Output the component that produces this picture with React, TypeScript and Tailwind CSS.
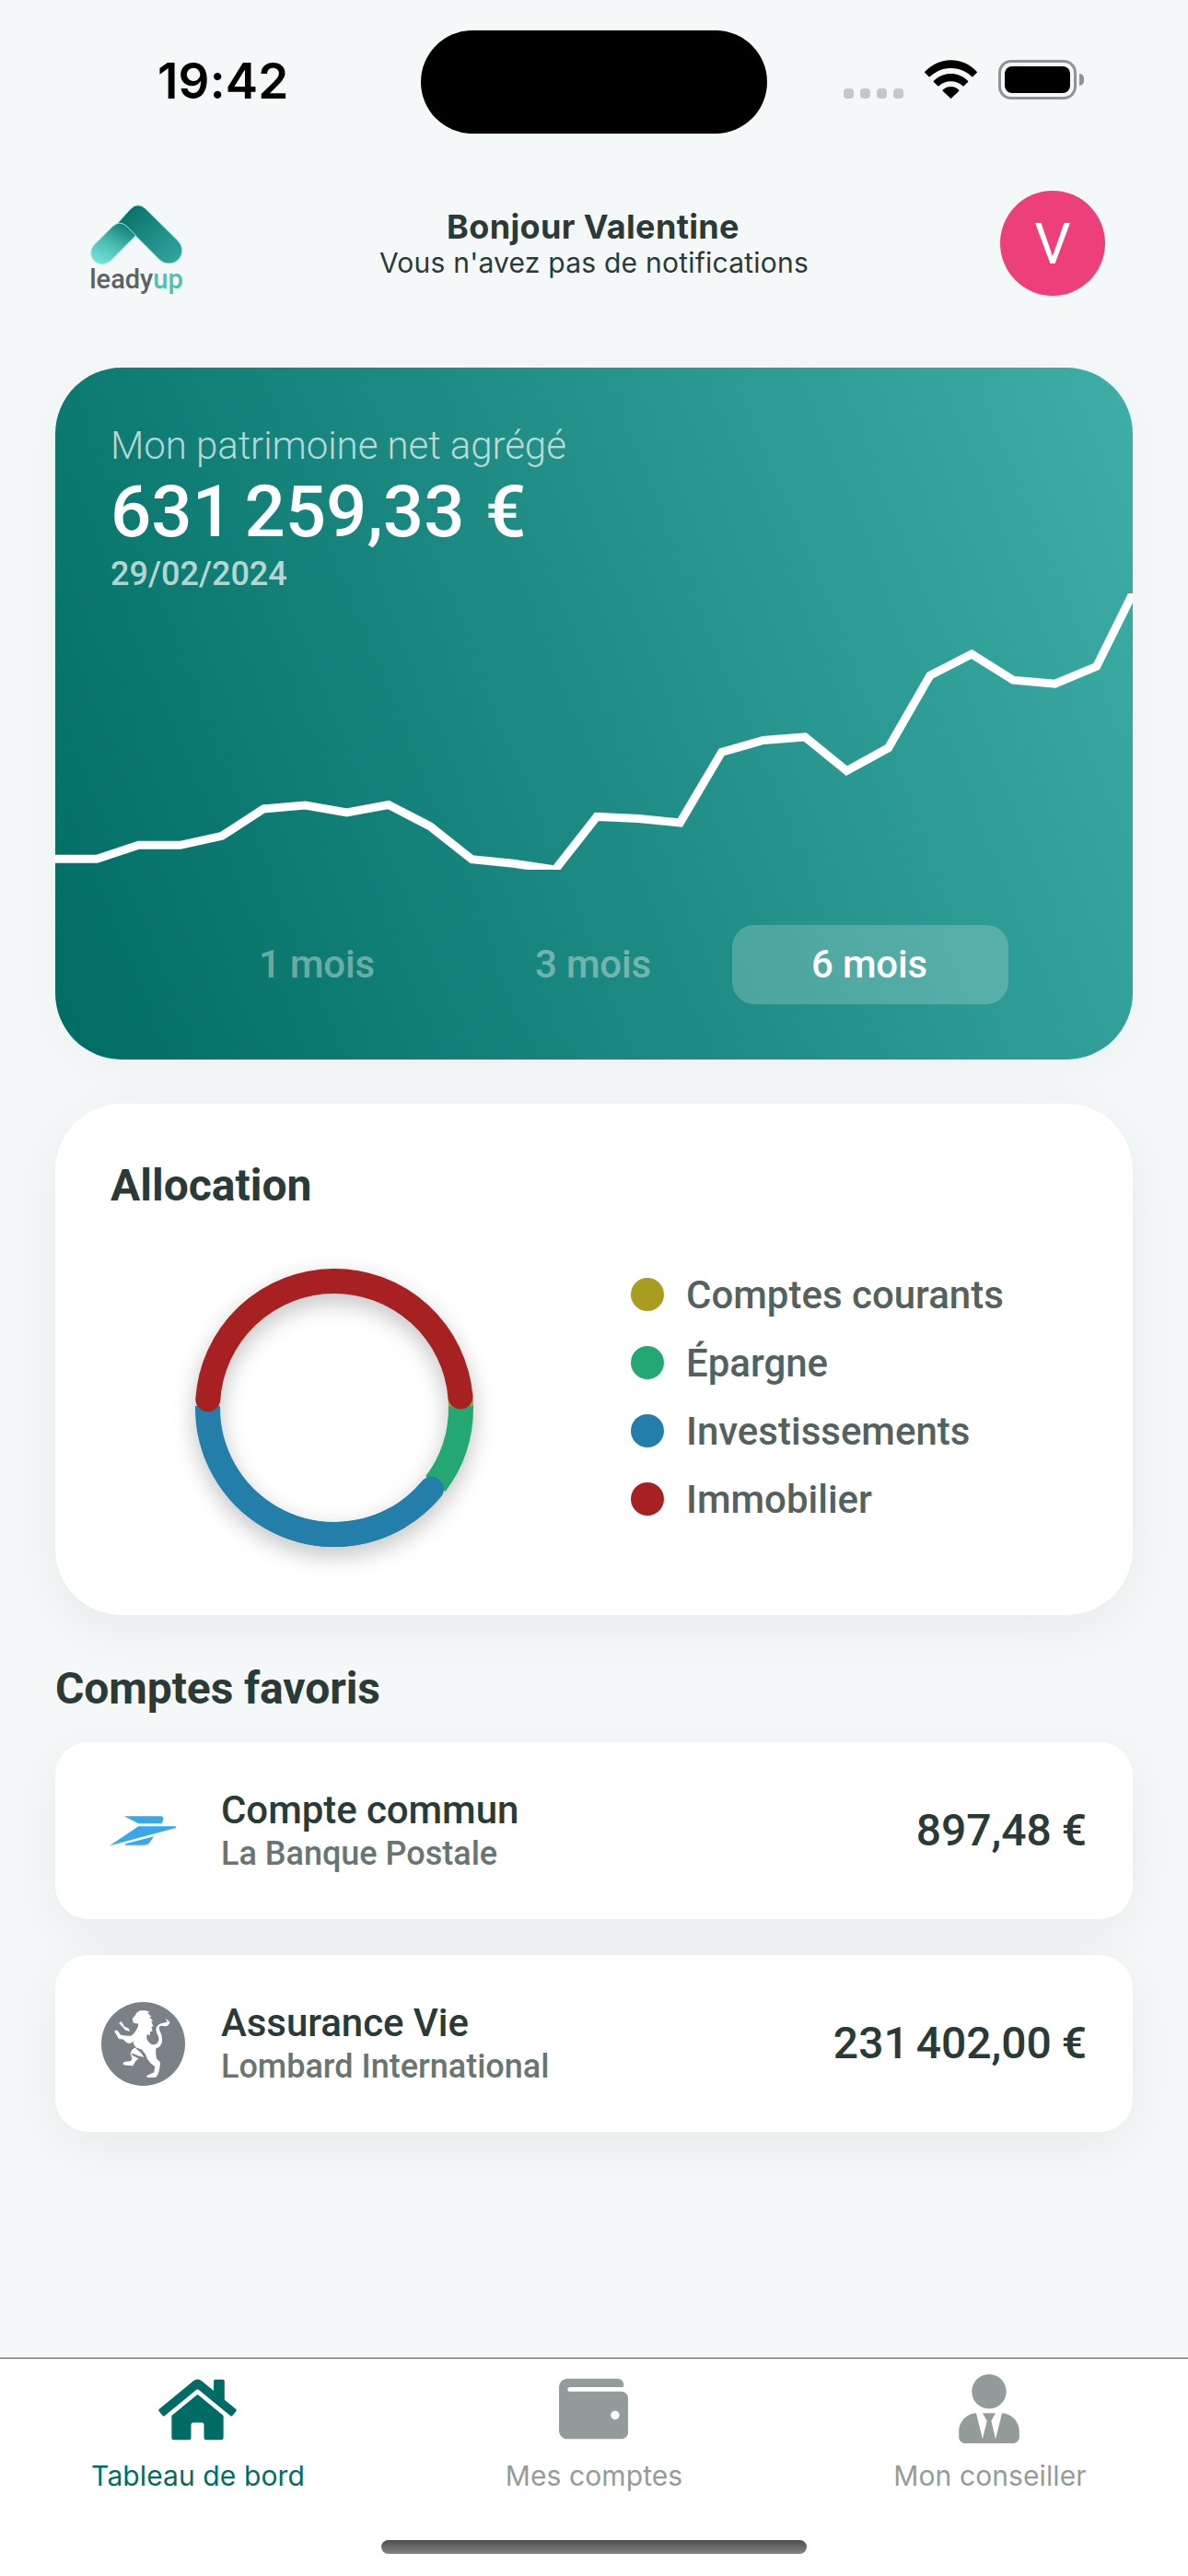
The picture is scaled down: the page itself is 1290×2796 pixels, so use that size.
import React from "react";
import { FaHome, FaUserTie, FaWallet } from "react-icons/fa";

const history = [
  288.2, 288.2, 273.3, 273.3, 263.3, 234, 230, 238, 229.5, 252.9, 288.7, 293.2, 300, 242.4, 244.4,
  248.9, 172.3, 159.4, 155.9, 192.7, 167.8, 89.2, 65.9, 94.2, 98.2, 79.3, 0,
];

const categories = [
  { name: "Comptes courants", dot: "bg-[#a89c21]" },
  { name: "Épargne", dot: "bg-[#24a772]" },
  { name: "Investissements", dot: "bg-[#237fa9]" },
  { name: "Immobilier", dot: "bg-[#a82122]" },
];

function StatusBar() {
  return (
    <div className="flex h-[163px] shrink-0 pl-[171px] pr-[113px]">
      <div className="mt-[56px] w-[286px] whitespace-nowrap text-[53px] font-semibold leading-[64px] tracking-[0.2px] text-black">
        19:42
      </div>
      <div className="mt-[33px] h-[112px] w-[376px] rounded-full bg-black" />
      <div className="ml-auto mt-[65px] flex h-[43px] w-[261px] items-start">
        <div className="mt-[31px] flex gap-[7px]">
          {[0, 1, 2, 3].map((i) => (
            <span key={i} className="size-[11px] rounded-[4px] bg-[#c3c7c8]" />
          ))}
        </div>
        <svg viewBox="0 0 172 126" className="ml-[23px] h-[42px] w-[57px]">
          <path d="M1 38 C48 -12 124 -12 171 38 Q173 40 171 42 L158 55 Q156 56 154 54 C116 18 56 18 18 54 Q16 56 14 55 L1 42 Q-1 40 1 38Z" />
          <path d="M30 68 C62 37 110 37 142 68 Q144 70 142 72 L129 85 Q127 87 125 85 C103 65 69 65 47 85 Q45 87 43 85 L30 72 Q28 70 30 68Z" />
          <path d="M60 98 C75 84 97 84 112 98 Q114 100 112 102 L88 125 Q86 127 84 125 L60 102 Q58 100 60 98Z" />
        </svg>
        <div className="ml-[23px] flex h-[43px] w-[85px] items-center justify-center rounded-[14px] border-[3px] border-[#8f9394]">
          <div className="h-[29px] w-[71px] rounded-[8px] bg-black" />
        </div>
        <div className="ml-[3px] mt-[15px] h-[13px] w-[5px] rounded-r-full bg-[#8f9394]" />
      </div>
    </div>
  );
}

function Logo() {
  return (
    <div className="ml-[6px] flex w-[104px] flex-col items-center self-start pt-[14px]">
      <svg viewBox="108 64 308 202" className="h-[67px] w-[103px] shrink-0">
        <defs>
          <linearGradient id="roof" x1="0" y1="0" x2="1" y2="1">
            <stop offset="0.15" stopColor="#0b736c" />
            <stop offset="1" stopColor="#36a9a1" />
          </linearGradient>
          <linearGradient id="wing" x1="0.75" y1="0.1" x2="0.25" y2="1">
            <stop offset="0" stopColor="#18857e" />
            <stop offset="0.5" stopColor="#4ebdb4" />
            <stop offset="1" stopColor="#74e0d6" />
          </linearGradient>
        </defs>
        <path
          d="M196 132 L241 82 Q265 58 290 80 L397 186 C425 216 405 260 366 260 Q350 260 338 249 L245 156 Z"
          fill="url(#roof)"
          stroke="#8deee5"
          strokeWidth="3"
        />
        <path
          d="M186 136 Q208 119 229 138 L259 168 L178 249 C160 267 128 266 116 242 Q106 220 122 200 Z"
          fill="url(#wing)"
          stroke="#8deee5"
          strokeWidth="3"
        />
      </svg>
      <div className="whitespace-nowrap font-[Roboto,sans-serif] text-[29px] font-medium leading-[30px] text-[#606161]">
        leady<span className="text-[#4dc0b7]">up</span>
      </div>
    </div>
  );
}

function Header() {
  return (
    <header className="mt-[44px] grid h-[114px] shrink-0 grid-cols-[1fr_auto_1fr] items-center px-[90px] text-[#293a37]">
      <Logo />
      <div className="text-center">
        <h1 className="whitespace-nowrap pr-[2px] text-[36px] font-bold leading-[42px] tracking-[0.35px]">
          Bonjour Valentine
        </h1>
        <p className="whitespace-nowrap text-[30px] leading-[36px] tracking-[0.23px]">Vous n'avez pas de notifications</p>
      </div>
      <div className="flex size-[114px] items-center justify-center justify-self-end rounded-full bg-[#ed3f7a] font-[Roboto,sans-serif] text-[62px] text-white">
        V
      </div>
    </header>
  );
}

function NetWorthCard() {
  const points = history.map((y, i) => `${Math.min(i * 45.23, 1170)},${y}`).join(" ");
  return (
    <section className="mt-[78px] h-[751px] shrink-0 overflow-hidden rounded-[72px] bg-[linear-gradient(68deg,#006c64_0%,#3eaea7_100%)] pt-[60px] text-white shadow-[0_12px_60px_rgba(0,0,0,0.03)]">
      <div className="px-[60px]">
        <div className="text-[42px] font-light leading-[50px] tracking-[-0.06px] text-white/70">
          Mon patrimoine net agrégé
        </div>
        <div className="text-[78px] font-medium leading-[93px] [word-spacing:3px]">
          <span className="[word-spacing:-7px]">631 259,33</span> €
        </div>
        <div className="text-[36px] font-medium leading-[42px] text-white/70">29/02/2024</div>
      </div>
      <svg viewBox="0 0 1170 300" className="block h-[300px] w-[1170px] overflow-hidden">
        <polyline points={points} fill="none" stroke="#fff" strokeWidth="9" />
      </svg>
      <div className="mx-auto mt-[60px] grid w-[900px] grid-cols-3 text-center text-[42px] font-medium leading-[86px] tracking-[-0.2px]">
        <div className="pr-[2px] text-white/40">1 mois</div>
        <div className="pr-[2px] text-white/40">3 mois</div>
        <div className="rounded-[24px] bg-white/20 pr-[2px]">6 mois</div>
      </div>
    </section>
  );
}

const arc = (from: number, to: number) => {
  const p = (a: number) => {
    const t = (a * Math.PI) / 180;
    return `${(151 + 137.5 * Math.cos(t)).toFixed(2)} ${(151 + 137.5 * Math.sin(t)).toFixed(2)}`;
  };
  return `M${p(from)} A137.5 137.5 0 ${to - from > 180 ? 1 : 0} 1 ${p(to)}`;
};

function Allocation() {
  return (
    <section className="mt-[48px] h-[555px] shrink-0 rounded-[72px] bg-white px-[60px] pt-[61px] shadow-[0_15px_60px_rgba(0,0,0,0.06)]">
      <h2 className="text-[48px] font-bold leading-[56px]">Allocation</h2>
      <div className="mt-[53px] flex items-start">
        <svg
          viewBox="0 0 302 302"
          className="ml-[92px] mt-[9px] size-[302px] shrink-0 overflow-visible drop-shadow-[0_9px_12px_rgba(0,0,0,0.24)]"
          fill="none"
          strokeWidth="27"
        >
          <path d={arc(-6, 0)} stroke="#a89c21" />
          <path d={arc(-0.8, 37)} stroke="#24a772" />
          <path d={arc(60, 180.8)} stroke="#237fa9" />
          <path d={arc(40, 120)} stroke="#237fa9" strokeLinecap="round" />
          <path d={arc(183.8, 355)} stroke="#a82122" strokeLinecap="round" />
        </svg>
        <ul className="ml-[171px]">
          {categories.map((c) => (
            <li key={c.name} className="flex h-[74px] items-center gap-[24px] text-[42px] font-medium text-[#54625f]">
              <span className={`size-[36px] rounded-full ${c.dot}`} />
              {c.name}
            </li>
          ))}
        </ul>
      </div>
    </section>
  );
}

function PostaleLogo() {
  return (
    <svg viewBox="0 0 216 96" className="mr-px h-[32px] w-[72px]" fill="#38a8e6">
      <path d="M47 1 H168 Q178 3 174 14 L170 25 H94 Z" />
      <path d="M94 34 H216 V39 L0 97 Z" />
      <path d="M144 67 L130 88 Q124 95 114 95 H51 V91 Z" />
    </svg>
  );
}

function LombardLogo() {
  return (
    <svg viewBox="61 68 272 272" className="size-[91px]">
      <circle cx="197" cy="204" r="136" fill="#7a8187" />
      <g fill="#fff">
        <path d="M170 113 L176 102 L187 96 L205 96 L218 100 L211 104 L224 116 L217 116 L229 130 L223 131 L230 147 L224 148 L227 164 L220 163 L218 178 L210 171 L208 185 C216 205 228 210 240 203 C251 195 249 183 242 171 C234 153 242 139 262 136 L275 133 L269 121 L283 132 C283 143 272 150 259 145 C247 144 246 153 254 168 C262 190 261 212 238 219 L238 234 L240 251 L252 263 C252 280 249 291 245 303 L238 312 L210 313 L208 307 L221 301 L232 296 L235 277 L223 268 L211 254 L204 237 L192 222 L174 216 L166 205 L165 196 C153 207 143 203 133 190 L117 187 L112 177 L104 165 L106 160 L112 160 L116 164 L124 175 L139 177 L158 178 L170 166 L180 149 L181 138 L168 137 L164 133 L162 122 Z" />
        <path d="M118 137 L125 131 L130 137 L135 147 L149 153 L154 164 L139 159 L130 149 Z" />
        <path d="M170 216 L161 223 L155 236 L166 236 L182 243 L200 247 L190 233 Z" />
        <path d="M155 236 L161 252 L157 259 L135 262 L130 269 L137 273 L164 275 L172 260 L182 251 L168 244 Z" />
      </g>
    </svg>
  );
}

function Account(props: { logo: React.ReactNode; name: string; bank: string; amount: string }) {
  return (
    <li className="flex h-[192px] items-center rounded-[36px] bg-white pl-[50px] pr-[50px] shadow-[0_15px_60px_rgba(0,0,0,0.06)]">
      <div className="flex w-[91px] justify-center">{props.logo}</div>
      <div className="ml-[39px] flex-1 font-medium">
        <div className="text-[42px] leading-[50px] tracking-[-0.06px]">{props.name}</div>
        <div className="text-[36px] leading-[44px] text-[#697572]">{props.bank}</div>
      </div>
      <div className="text-[48px] font-medium [word-spacing:-1px]">
        <span className="[word-spacing:-4px]">{props.amount}</span> €
      </div>
    </li>
  );
}

function TabBar() {
  const tabs = [
    { label: "Tableau de bord", icon: FaHome, color: "text-[#016c65]", width: "w-[85px] translate-y-px" },
    { label: "Mes comptes", icon: FaWallet, color: "text-[#939c9a]", width: "w-[75px]" },
    { label: "Mon conseiller", icon: FaUserTie, color: "text-[#939c9a]", width: "w-[66px]" },
  ];
  return (
    <nav className="mt-auto flex h-[237px] shrink-0 flex-col items-center border-t border-[#016c65] bg-white">
      <div className="grid w-full grid-cols-3 pt-[17px]">
        {tabs.map(({ label, icon: Icon, color, width }) => (
          <div key={label} className={`flex flex-col items-center ${color}`}>
            <Icon className={`mr-[2px] h-[75px] ${width}`} />
            <span className="mt-[17px] text-[30px] leading-[36px] tracking-[0.1px]">{label}</span>
          </div>
        ))}
      </div>
      <div className="mt-[52px] h-[15px] w-[462px] rounded-full bg-linear-to-b from-[#4d4d4d] to-[#858585]" />
    </nav>
  );
}

export default function App() {
  return (
    <div className="flex h-[2796px] w-[1290px] flex-col overflow-hidden bg-[#f4f8f9] font-[Inter,sans-serif]">
      <StatusBar />
      <Header />
      <main className="flex flex-col px-[60px] font-[Roboto,sans-serif] text-[#293a37]">
        <NetWorthCard />
        <Allocation />
        <h2 className="mt-[52px] text-[48px] font-bold leading-[56px] tracking-[-0.1px]">Comptes favoris</h2>
        <ul className="mt-[30px] flex flex-col gap-[39px]">
          <Account logo={<PostaleLogo />} name="Compte commun" bank="La Banque Postale" amount="897,48" />
          <Account logo={<LombardLogo />} name="Assurance Vie" bank="Lombard International" amount="231 402,00" />
        </ul>
      </main>
      <TabBar />
    </div>
  );
}
